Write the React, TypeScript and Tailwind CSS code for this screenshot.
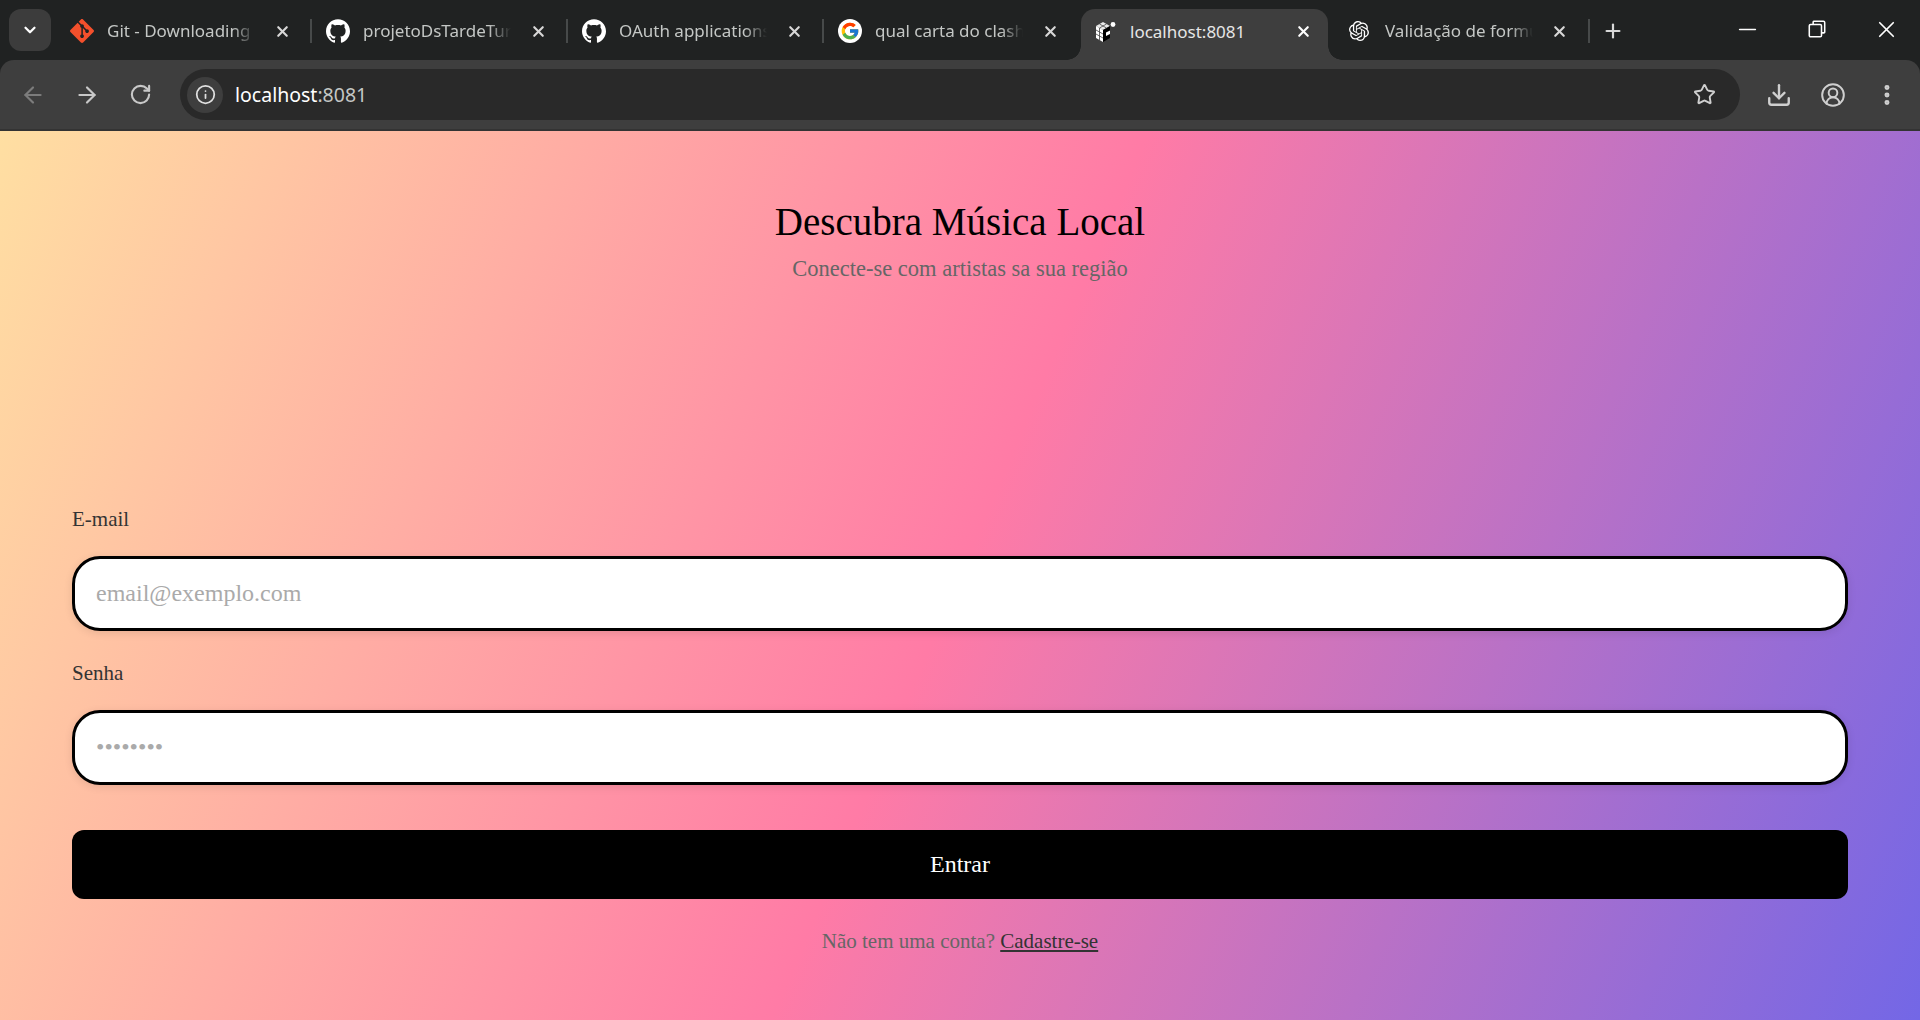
import React from 'react';
import { ArrowLeft, ArrowRight, ChevronDown, CircleUserRound, Download, EllipsisVertical, Info, Minus, Plus, RotateCw, Star, X } from 'lucide-react';
import { FcGoogle } from 'react-icons/fc';
import { SiGit, SiGithub, SiOpenai } from 'react-icons/si';

const CubeIcon = () => (
  <svg viewBox="0 0 22 22" className="h-[22px] w-[22px] shrink-0">
    <polygon points="9,1 16,5 9,9 2,5" fill="#e8e8e8" />
    <polygon points="2,5 9,9 9,21 2,17" fill="#fff" />
    <polygon points="9,9 16,5 16,17 9,21" fill="#000" />
    <polygon points="12,11.5 16,9.5 16,13 12,15" fill="#fff" />
    <path d="M5.5 3L12.5 7M12.5 3L5.5 7M5.5 7V19M2 9l7 4M2 13l7 4" stroke="#444" strokeWidth="0.8" fill="none" />
    <circle cx="19" cy="3.5" r="2.4" fill="#fff" />
  </svg>
);

const tabs = [
  { title: 'Git - Downloading', icon: <SiGit className="h-[24px] w-[24px] text-[#f4502c]" /> },
  { title: 'projetoDsTardeTurmaA', icon: <SiGithub className="h-[24px] w-[24px] text-white" /> },
  { title: 'OAuth applications', icon: <SiGithub className="h-[24px] w-[24px] text-white" /> },
  {
    title: 'qual carta do clash royale',
    icon: (
      <span className="flex h-[24px] w-[24px] items-center justify-center rounded-full bg-white">
        <FcGoogle className="h-[20px] w-[20px]" />
      </span>
    ),
  },
];

const TabTitle = ({ children }: { children: string }) => (
  <span className="ml-[13px] w-[148px] overflow-hidden text-[17px] whitespace-nowrap text-[#c4c7c5] [mask-image:linear-gradient(to_right,#000_85%,transparent)]">
    {children}
  </span>
);

const TabItem = ({ title, icon }: { title: string; icon: React.ReactNode }) => (
  <div className="flex h-[60px] w-[254px] shrink-0 items-center pt-[2px] pl-[14px]">
    {icon}
    <TabTitle>{title}</TabTitle>
    <X className="ml-[19px] h-[17px] w-[17px] text-[#d8d8d8]" strokeWidth={3} />
  </div>
);

const Sep = () => <div className="mt-[2px] h-[24px] w-[2px] shrink-0 self-center bg-[#474a4a]" />;

export default function App() {
  return (
    <div className="flex h-[1020px] w-[1920px] flex-col overflow-hidden bg-[#202222] font-['Liberation_Serif',serif]">
      {/* tab strip */}
      <div className="flex h-[60px] shrink-0 items-end bg-[#202222] font-['Noto_Sans',sans-serif]">
        <div className="mb-[9px] ml-[9px] flex h-[42px] w-[42px] items-center justify-center rounded-[12px] bg-[#3c3c3c]">
          <ChevronDown className="h-[18px] w-[18px] text-white" strokeWidth={3} />
        </div>
        <div className="ml-[5px] flex items-center">
          <TabItem {...tabs[0]} />
          <Sep />
          <TabItem {...tabs[1]} />
          <Sep />
          <TabItem {...tabs[2]} />
          <Sep />
          <TabItem {...tabs[3]} />
        </div>
        <div className="relative ml-[3px] flex h-[51px] w-[247px] shrink-0 items-center rounded-t-[14px] bg-[#3e3e3e] pb-[6px] pl-[13px]">
          <span className="absolute bottom-0 -left-[14px] h-[14px] w-[14px] bg-[radial-gradient(circle_at_0_0,transparent_13.5px,#3e3e3e_14px)]" />
          <span className="absolute -right-[14px] bottom-0 h-[14px] w-[14px] bg-[radial-gradient(circle_at_100%_0,transparent_13.5px,#3e3e3e_14px)]" />
          <CubeIcon />
          <span className="ml-[14px] text-[17px] whitespace-nowrap text-[#e6e6e6]">localhost:8081</span>
          <X className="mr-[16px] ml-auto h-[17px] w-[17px] text-white" strokeWidth={3} />
        </div>
        <div className="flex h-[60px] w-[260px] shrink-0 items-center pt-[2px] pl-[21px]">
          <SiOpenai className="h-[20px] w-[20px] text-white" />
          <span className="ml-[16px] w-[148px] overflow-hidden text-[17px] whitespace-nowrap text-[#c4c7c5] [mask-image:linear-gradient(to_right,#000_85%,transparent)]">
            Validação de formulários
          </span>
          <X className="ml-[18px] h-[17px] w-[17px] text-[#d8d8d8]" strokeWidth={3} />
        </div>
        <Sep />
        <Plus className="mb-[18px] ml-[12px] h-[22px] w-[22px] text-[#d8d8d8]" strokeWidth={2.4} />
        <div className="ml-auto flex h-[60px] items-center pb-[2px]">
          <Minus className="mr-[47px] h-[27px] w-[27px] text-white" strokeWidth={1.4} />
          <svg viewBox="0 0 14 14" className="mr-[47px] h-[18px] w-[18px]" fill="none" stroke="#fff" strokeWidth="1.2">
            <rect x="1" y="3.5" width="9.5" height="9.5" rx="1" />
            <path d="M4 3.5V1.5A.7.7 0 0 1 4.7 1H12a1 1 0 0 1 1 1v7.3a.7.7 0 0 1-.7.7h-1.8" />
          </svg>
          <X className="mr-[20px] h-[27px] w-[27px] text-white" strokeWidth={1.5} />
        </div>
      </div>

      {/* toolbar */}
      <div className="flex h-[71px] shrink-0 items-center rounded-t-[14px] border-b-2 border-[#333] bg-[#3e3e3e]">
        <ArrowLeft className="ml-[20px] h-[26px] w-[26px] text-[#7c7c7c]" strokeWidth={2} />
        <ArrowRight className="ml-[28px] h-[26px] w-[26px] text-[#c8c8c8]" strokeWidth={2} />
        <RotateCw className="ml-[29px] h-[23px] w-[23px] text-[#c8c8c8]" strokeWidth={2.2} />
        <div className="ml-[28px] flex h-[51px] w-[1560px] items-center rounded-full bg-[#292929] pr-[24px] pl-[7px]">
          <div className="flex h-[36px] w-[36px] items-center justify-center rounded-full bg-[#3e3e3e]">
            <Info className="h-[21px] w-[21px] text-[#e0e0e0]" strokeWidth={2} />
          </div>
          <span className="ml-[12px] font-['Noto_Sans',sans-serif] text-[19.5px] text-white">
            localhost<span className="text-[#c4c7c5]">:8081</span>
          </span>
          <Star className="ml-auto h-[23px] w-[23px] text-[#cfcfcf]" strokeWidth={2} />
        </div>
        <Download className="ml-[26px] h-[26px] w-[26px] text-[#cfcfcf]" strokeWidth={2.2} />
        <CircleUserRound className="ml-[28px] h-[26px] w-[26px] text-[#cfcfcf]" strokeWidth={1.8} />
        <EllipsisVertical className="ml-[28px] h-[26px] w-[26px] text-[#cfcfcf]" strokeWidth={2.6} />
      </div>

      {/* page */}
      <main className="flex flex-1 flex-col bg-[linear-gradient(113deg,#ffdfa2_0%,#ff7ba6_50%,#7367e6_100%)] px-[72px]">
        <h1 className="mt-[68px] text-center text-[39px] leading-[46px] text-black">Descubra Música Local</h1>
        <p className="mt-[11px] text-center text-[22.5px] leading-[26px] text-[#666]">Conecte-se com artistas sa sua região</p>

        <label className="mt-[225px] text-[21px] leading-[24px] text-[#333]">E-mail</label>
        <input
          type="email"
          placeholder="email@exemplo.com"
          className="mt-[25px] h-[75px] w-full rounded-[28px] border-[3px] border-black bg-white px-[21px] text-[24px] shadow-[0_2px_8px_rgba(0,0,0,0.1)] outline-none placeholder:text-[#aaa]"
        />
        <label className="mt-[30px] text-[21px] leading-[24px] text-[#333]">Senha</label>
        <input
          type="text"
          placeholder="••••••••"
          className="mt-[25px] h-[75px] w-full rounded-[28px] border-[3px] border-black bg-white px-[21px] text-[24px] shadow-[0_2px_8px_rgba(0,0,0,0.1)] outline-none placeholder:text-[#aaa]"
        />
        <button className="mt-[45px] h-[69px] w-full rounded-[12px] bg-black pb-[2px] text-[24px] text-white">Entrar</button>
        <p className="mt-[30px] text-center text-[21px] leading-[24px] text-[#666]">
          Não tem uma conta? <a className="text-[#333] underline">Cadastre-se</a>
        </p>
      </main>
    </div>
  );
}
